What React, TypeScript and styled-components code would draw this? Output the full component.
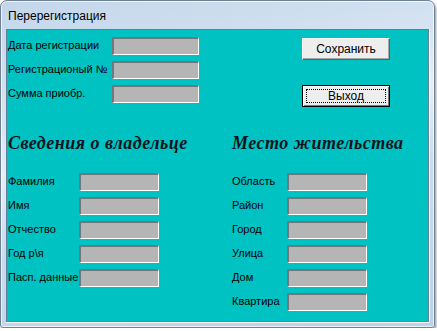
import { Fragment } from "react";
import { createGlobalStyle, styled } from "styled-components";

const GlobalStyle = createGlobalStyle`
  html, body {
    margin: 0;
    padding: 0;
    background: #ffffff;
  }
  body {
    font-family: "Liberation Sans", Arial, sans-serif;
  }
`;

const Window = styled.div`
  width: 435px;
  height: 328px;
  box-sizing: border-box;
  border: 1px solid #6f8194;
  border-radius: 7px 7px 3px 3px;
  background: linear-gradient(
    168deg,
    #c3d6ea 0%,
    #d7e4f2 30%,
    #e6eef8 42%,
    #c9dbee 60%,
    #bcd2ea 100%
  );
  box-shadow: 1px 2px 3px rgba(0, 0, 0, 0.45),
    inset 0 0 0 1px rgba(255, 255, 255, 0.7);
  display: flex;
  flex-direction: column;
  padding: 0 5px 5px 5px;
`;

const TitleBar = styled.div`
  height: 28px;
  display: flex;
  align-items: center;
  padding-left: 2px;
  padding-top: 1px;
  box-sizing: border-box;
  font-size: 12px;
  color: #000;
`;

const Client = styled.div`
  flex: 1;
  background: #00c2c2;
  border: 1px solid #5f7f9a;
  box-shadow: 0 1px 0 #ffffff, 1px 0 0 #ffffff;
  display: flex;
  flex-direction: column;
  font-size: 11px;
  color: #000;
`;

const Top = styled.div`
  display: flex;
  padding-top: 7px;
`;

const TopForm = styled.div`
  display: grid;
  grid-template-columns: 105px 87px;
  grid-auto-rows: 18px;
  row-gap: 6px;
`;

const Label = styled.div`
  display: flex;
  align-items: center;
  padding-left: 1px;
  white-space: nowrap;
  margin-top: -3px;
`;

const Field = styled.input<{ $w: number }>`
  width: ${(p) => p.$w}px;
  height: 18px;
  box-sizing: border-box;
  margin: 0;
  padding: 0;
  background: #b5b5b5;
  border-style: solid;
  border-width: 2px 1px 1px 2px;
  border-color: #6f7780 #ffffff #ffffff #6f7780;
  outline: none;
`;

const Buttons = styled.div`
  margin-left: auto;
  margin-right: 38px;
  margin-top: 1px;
  display: flex;
  flex-direction: column;
  gap: 25px;
`;

const Button = styled.button<{ $default?: boolean }>`
  width: 88px;
  height: 22px;
  box-sizing: border-box;
  margin: 0;
  padding: 0;
  position: relative;
  font-family: "Liberation Sans", Arial, sans-serif;
  font-size: 12px;
  color: #000;
  background: #eeeeee;
  border-style: solid;
  border-width: 1px;
  border-color: ${(p) =>
    p.$default ? "#000 #000 #000 #000" : "#ffffff #5e5e5e #5e5e5e #ffffff"};
  box-shadow: ${(p) =>
    p.$default
      ? "inset 1px 1px 0 #ffffff, inset -1px -1px 0 #7a7a7a"
      : "inset -1px -1px 0 #a8a8a8"};
`;

const FocusRing = styled.span`
  position: absolute;
  inset: 3px;
  border: 1px dotted #000;
`;

const Sections = styled.div`
  display: grid;
  grid-template-columns: 224px 1fr;
  margin-top: 26px;
`;

const Section = styled.div`
  display: flex;
  flex-direction: column;
`;

const Heading = styled.h2`
  margin: 0 0 20px 0;
  height: 20px;
  line-height: 20px;
  font-family: "Liberation Serif", "Times New Roman", serif;
  font-style: italic;
  font-weight: bold;
  font-size: 18px;
  letter-spacing: 0.5px;
  color: #0a1420;
  padding-left: 1px;
  white-space: nowrap;
`;

const SectionForm = styled.div<{ $labelW: number }>`
  display: grid;
  grid-template-columns: ${(p) => p.$labelW}px 80px;
  grid-auto-rows: 18px;
  row-gap: 6px;
`;

const ownerFields = ["Фамилия", "Имя", "Отчество", "Год р\\я", "Пасп. данные"];
const addressFields = ["Область", "Район", "Город", "Улица", "Дом", "Квартира"];

const App = () => {
  return (
    <>
      <GlobalStyle />
      <Window>
        <TitleBar>Перерегистрация</TitleBar>
        <Client>
          <Top>
            <TopForm>
              <Label>Дата регистрации</Label>
              <Field $w={87} readOnly tabIndex={-1} />
              <Label>Регистрационый №</Label>
              <Field $w={87} readOnly tabIndex={-1} />
              <Label>Сумма приобр.</Label>
              <Field $w={87} readOnly tabIndex={-1} />
            </TopForm>
            <Buttons>
              <Button>Сохранить</Button>
              <Button $default>
                <FocusRing />
                Выход
              </Button>
            </Buttons>
          </Top>
          <Sections>
            <Section>
              <Heading>Сведения о владельце</Heading>
              <SectionForm $labelW={72}>
                {ownerFields.map((f) => (
                  <Fragment key={f}>
                    <Label>{f}</Label>
                    <Field $w={80} readOnly tabIndex={-1} />
                  </Fragment>
                ))}
              </SectionForm>
            </Section>
            <Section>
              <Heading>Место жительства</Heading>
              <SectionForm $labelW={56}>
                {addressFields.map((f) => (
                  <Fragment key={f}>
                    <Label>{f}</Label>
                    <Field $w={80} readOnly tabIndex={-1} />
                  </Fragment>
                ))}
              </SectionForm>
            </Section>
          </Sections>
        </Client>
      </Window>
    </>
  );
};

export default App;
